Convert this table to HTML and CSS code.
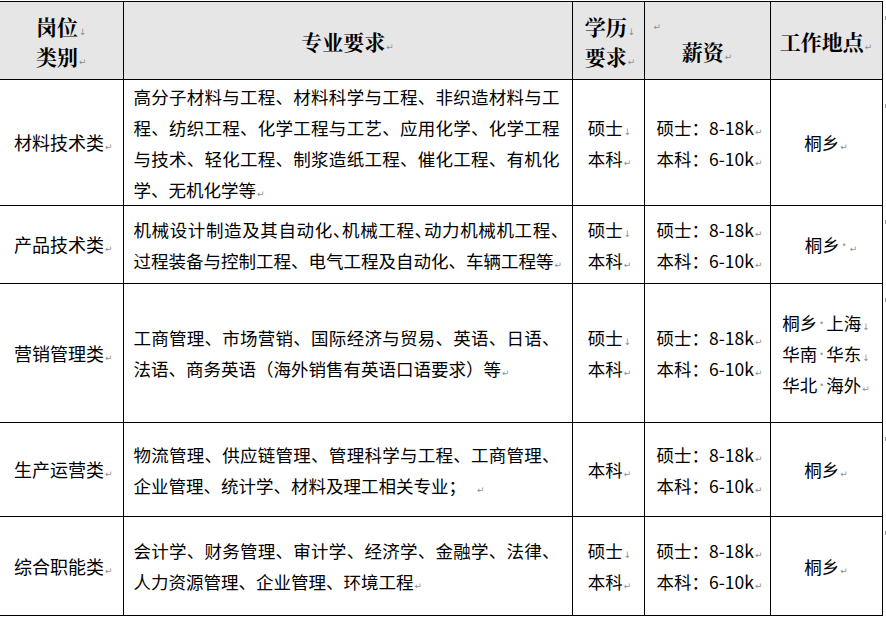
FILE: index.html
```html
<!DOCTYPE html>
<html lang="zh-CN">
<head>
<meta charset="utf-8">
<title>岗位类别</title>
<link rel="stylesheet" href="styles.css">
</head>
<body>
<table class="jobs">
  <colgroup>
    <col class="c-type"><col class="c-major"><col class="c-edu"><col class="c-pay"><col class="c-loc"><col class="c-end">
  </colgroup>
  <thead>
    <tr class="r-head">
      <th class="first"><div>岗位<span class="br">↓</span></div><div>类别<span class="pm">↵</span></div></th>
      <th>专业要求<span class="pm">↵</span></th>
      <th class="edu-head"><div>学历<span class="br">↓</span></div><div>要求<span class="pm">↵</span></div></th>
      <th class="pay-head"><div class="empty"><span class="pm">↵</span></div><div>薪资<span class="pm">↵</span></div></th>
      <th>工作地点<span class="pm">↵</span></th>
      <td class="end"><span class="mk"></span></td>
    </tr>
  </thead>
  <tbody>
    <tr class="r1">
      <td class="type first">材料技术类<span class="pm">↵</span></td>
      <td class="major">
        <div class="j">高分子材料与工程、材料科学与工程、非织造材料与工</div>
        <div class="j">程、纺织工程、化学工程与工艺、应用化学、化学工程</div>
        <div class="j">与技术、轻化工程、制浆造纸工程、催化工程、有机化</div>
        <div>学、无机化学等<span class="pm">↵</span></div>
      </td>
      <td class="edu"><div>硕士<span class="br">↓</span></div><div>本科<span class="pm">↵</span></div></td>
      <td class="pay"><div>硕士：8-18k<span class="pm">↵</span></div><div>本科：6-10k<span class="pm">↵</span></div></td>
      <td class="loc">桐乡<span class="pm">↵</span></td>
      <td class="end r1-end"><span class="mk"></span></td>
    </tr>
    <tr class="r2">
      <td class="type first">产品技术类<span class="pm">↵</span></td>
      <td class="major">
        <div class="j halt">机械设计制造及其自动化、机械工程、动力机械机工程、</div>
        <div>过程装备与控制工程、电气工程及自动化、车辆工程等<span class="pm">↵</span></div>
      </td>
      <td class="edu"><div>硕士<span class="br">↓</span></div><div>本科<span class="pm">↵</span></div></td>
      <td class="pay"><div>硕士：8-18k<span class="pm">↵</span></div><div>本科：6-10k<span class="pm">↵</span></div></td>
      <td class="loc shift">桐乡<span class="sp">•</span><span class="pm">↵</span></td>
      <td class="end"><span class="mk"></span></td>
    </tr>
    <tr class="r3">
      <td class="type first">营销管理类<span class="pm">↵</span></td>
      <td class="major">
        <div class="j">工商管理、市场营销、国际经济与贸易、英语、日语、</div>
        <div>法语、商务英语（海外销售有英语口语要求）等<span class="pm">↵</span></div>
      </td>
      <td class="edu"><div>硕士<span class="br">↓</span></div><div>本科<span class="pm">↵</span></div></td>
      <td class="pay"><div>硕士：8-18k<span class="pm">↵</span></div><div>本科：6-10k<span class="pm">↵</span></div></td>
      <td class="loc">
        <div>桐乡<span class="sp">•</span>上海<span class="br">↓</span></div>
        <div>华南<span class="sp">•</span>华东<span class="br">↓</span></div>
        <div>华北<span class="sp">•</span>海外<span class="pm">↵</span></div>
      </td>
      <td class="end"><span class="mk"></span></td>
    </tr>
    <tr class="r4">
      <td class="type first">生产运营类<span class="pm">↵</span></td>
      <td class="major">
        <div class="j">物流管理、供应链管理、管理科学与工程、工商管理、</div>
        <div>企业管理、统计学、材料及理工相关专业；<span class="gap"></span><span class="pm">↵</span></div>
      </td>
      <td class="edu"><div>本科<span class="pm">↵</span></div></td>
      <td class="pay"><div>硕士：8-18k<span class="pm">↵</span></div><div>本科：6-10k<span class="pm">↵</span></div></td>
      <td class="loc">桐乡<span class="pm">↵</span></td>
      <td class="end"><span class="mk"></span></td>
    </tr>
    <tr class="r5">
      <td class="type first">综合职能类<span class="pm">↵</span></td>
      <td class="major">
        <div class="j">会计学、财务管理、审计学、经济学、金融学、法律、</div>
        <div>人力资源管理、企业管理、环境工程<span class="pm">↵</span></div>
      </td>
      <td class="edu"><div>硕士<span class="br">↓</span></div><div>本科<span class="pm">↵</span></div></td>
      <td class="pay"><div>硕士：8-18k<span class="pm">↵</span></div><div>本科：6-10k<span class="pm">↵</span></div></td>
      <td class="loc">桐乡<span class="pm">↵</span></td>
      <td class="end"><span class="mk"></span></td>
    </tr>
  </tbody>
</table>
</body>
</html>
```

FILE: styles.css
```css
html, body {
  margin: 0;
  padding: 0;
  background: #ffffff;
}

body {
  padding-top: 1px;
  font-family: "Noto Sans CJK SC", "Microsoft YaHei", sans-serif;
  color: #000000;
}

.jobs {
  border-collapse: collapse;
  table-layout: fixed;
  width: 886px;
}

.c-type { width: 123px; }
.c-major { width: 449px; }
.c-edu { width: 72px; }
.c-pay { width: 126px; }
.c-loc { width: 112px; }
.c-end { width: 4px; }

.jobs th,
.jobs td {
  border: 1px solid #000000;
  padding: 0;
  vertical-align: middle;
  white-space: nowrap;
}

.jobs .first {
  border-left: 0;
}

.jobs td.end {
  border-top: 0;
  border-bottom: 0;
  border-right: 0;
  vertical-align: top;
  padding-top: 14px;
}

.jobs td.r1-end {
  padding-top: 24px;
}

.mk {
  display: block;
  width: 2px;
  height: 4px;
  margin-left: 2px;
  background: #9a9a9a;
}

.r-head { height: 78px; }
.r1 { height: 126px; }
.r2 { height: 78px; }
.r3 { height: 139px; }
.r4 { height: 94px; }
.r5 { height: 99px; }

/* header */
.jobs th {
  background: #e7e6e6;
  font-family: "Noto Serif CJK SC", "Noto Sans CJK SC", serif;
  font-weight: 700;
  font-size: 21px;
  line-height: 30px;
  text-align: center;
}

.jobs th.edu-head {
  padding-left: 4px;
}

.jobs th.pay-head {
  vertical-align: top;
  padding-top: 4px;
}

.pay-head .empty {
  text-align: left;
  padding-left: 8px;
}

/* body cells */
.jobs td {
  font-size: 17.5px;
  line-height: 31px;
}

.jobs td.type {
  font-size: 18px;
  text-align: center;
  padding-left: 4px;
}

.jobs td.major {
  padding: 0 12px 0 10px;
  text-align: left;
}

.major .j {
  text-align: justify;
  text-align-last: justify;
}

.major .halt {
  font-feature-settings: "halt";
}

.jobs td.edu {
  text-align: center;
  padding-left: 3px;
}

.jobs td.pay {
  padding-left: 12px;
  text-align: left;
}

.jobs td.loc {
  text-align: center;
}

.jobs td.loc.shift {
  padding-left: 10px;
}

/* formatting marks */
.pm,
.br {
  font-family: "DejaVu Sans", sans-serif;
  font-weight: 400;
  font-size: 9px;
  line-height: 0;
  color: #8f8f8f;
  margin-left: 1px;
}

.sp {
  display: inline-block;
  width: 9px;
  line-height: 0;
  text-align: center;
  font-family: "DejaVu Sans", sans-serif;
  font-size: 8px;
  color: #9a9a9a;
  vertical-align: 4px;
}

.gap {
  display: inline-block;
  width: 10px;
}
```
